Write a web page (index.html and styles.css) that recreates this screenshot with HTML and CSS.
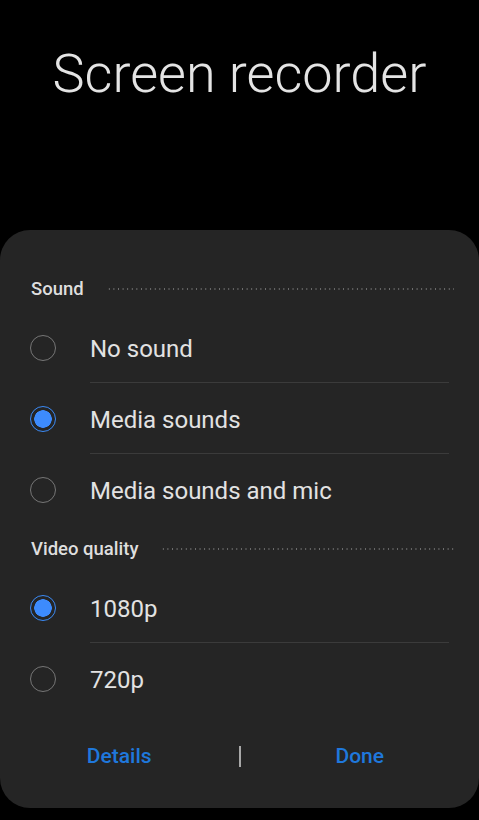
FILE: index.html
```html
<!DOCTYPE html>
<html lang="en">
    <head>
        <meta charset="UTF-8">
        <meta name="viewport" content="width=device-width, initial-scale=1.0">
        <title>Screen recorder</title>
        <link rel="stylesheet" href="styles.css">
    </head>
    <body>
        <h1 class="title">Screen recorder</h1>

        <div class="sheet">
            <!-- Sound -->
            <div class="section-head">
                <span class="section-name">Sound</span>
                <span class="dots"></span>
            </div>
            <div class="option">
                <span class="radio"></span>
                <span class="label">No sound</span>
            </div>
            <div class="option">
                <span class="radio checked"></span>
                <span class="label">Media sounds</span>
            </div>
            <div class="option last">
                <span class="radio"></span>
                <span class="label">Media sounds and mic</span>
            </div>

            <!-- Video quality -->
            <div class="section-head">
                <span class="section-name">Video quality</span>
                <span class="dots"></span>
            </div>
            <div class="option">
                <span class="radio checked"></span>
                <span class="label">1080p</span>
            </div>
            <div class="option last">
                <span class="radio"></span>
                <span class="label">720p</span>
            </div>

            <div class="actions">
                <button class="action">Details</button>
                <span class="divider"></span>
                <button class="action">Done</button>
            </div>
        </div>
    </body>
</html>
```

FILE: styles.css
```css
body {
    margin: 0;
    background: #000;
    font-family: Roboto, "Liberation Sans", sans-serif;
}

.title {
    margin: 0;
    height: 230px;
    box-sizing: border-box;
    padding-top: 47px;
    font-size: 54px;
    font-weight: 300;
    line-height: 1;
    text-align: center;
    color: #e4e4e4;
}

.sheet {
    background: #252525;
    border-radius: 30px;
    padding-top: 35px;
    padding-bottom: 12px;
}

.section-head {
    display: flex;
    align-items: center;
    height: 47px;
    padding: 0 25px 0 31px;
}

.section-name {
    font-size: 18.5px;
    font-weight: 500;
    color: #dedede;
}

.dots {
    flex: 1;
    height: 2px;
    margin-left: 23px;
    background-image: radial-gradient(circle, #707070 0.8px, transparent 1px);
    background-size: 4.6px 2px;
}

.option {
    display: flex;
    align-items: center;
    height: 71px;
    padding-left: 30px;
}

.radio {
    width: 26px;
    height: 26px;
    box-sizing: border-box;
    border: 1.5px solid #767676;
    border-radius: 50%;
    flex-shrink: 0;
}

.radio.checked {
    border-color: #3b8af5;
    background: radial-gradient(circle, #3d8bfd 8.5px, transparent 9px);
}

.label {
    flex: 1;
    align-self: stretch;
    display: flex;
    align-items: center;
    padding-top: 3px;
    margin: 0 30px 0 34px;
    border-bottom: 1px solid #3b3b3b;
    font-size: 24px;
    color: #e2e2e2;
}

.option.last .label {
    border-bottom: none;
}

.actions {
    display: flex;
    align-items: center;
    height: 80px;
    padding-top: 2px;
}

.action {
    flex: 1;
    background: none;
    border: none;
    padding: 0;
    font-family: inherit;
    font-size: 21px;
    font-weight: 500;
    color: #1f78dc;
}

.divider {
    width: 2px;
    height: 21px;
    background: #a8a8a8;
}
```
